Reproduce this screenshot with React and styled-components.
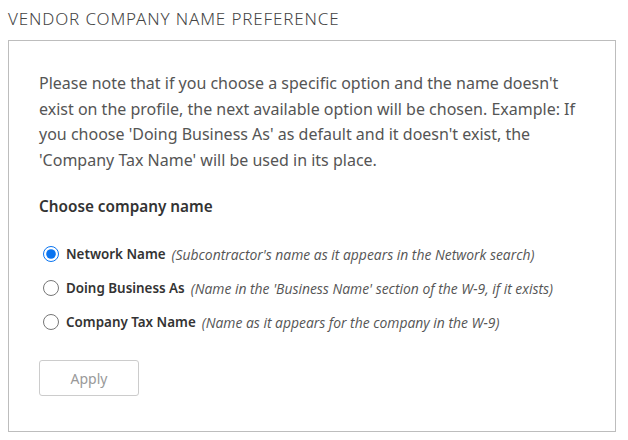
import React, { useState } from 'react';
import styled, { createGlobalStyle } from 'styled-components';

const GlobalStyle = createGlobalStyle`
  body {
    margin: 0;
    background: #fff;
    font-family: "Noto Sans", "Open Sans", sans-serif;
  }
`;

const options = [
  { id: 'network', name: 'Network Name', note: "(Subcontractor's name as it appears in the Network search)" },
  { id: 'dba', name: 'Doing Business As', note: "(Name in the 'Business Name' section of the W-9, if it exists)" },
  { id: 'tax', name: 'Company Tax Name', note: '(Name as it appears for the company in the W-9)' },
];

const App = () => {
  const [selected, setSelected] = useState('network');

  return (
    <Page>
      <GlobalStyle />
      <Heading>VENDOR COMPANY NAME PREFERENCE</Heading>
      <Panel>
        <Note>
          Please note that if you choose a specific option and the name doesn't exist on the profile, the next available option will be chosen. Example: If you choose 'Doing Business As' as default and it doesn't exist, the 'Company Tax Name' will be used in its place.
        </Note>
        <SubTitle>Choose company name</SubTitle>
        <Options>
          { options.map( opt => {
            return (
              <Option key={ opt.id }>
                <Radio
                  type="radio"
                  name="company-name"
                  checked={ selected === opt.id }
                  onChange={ () => setSelected(opt.id) }
                />
                <OptionName>{ opt.name }</OptionName>
                <OptionNote>{ opt.note }</OptionNote>
              </Option>
            )
          }) }
        </Options>
        <ApplyButton disabled>Apply</ApplyButton>
      </Panel>
    </Page>
  )
}

export default App;


const Page = styled.div`
  padding: 8px 12px 8px 8px;
  width: 628px;
  box-sizing: border-box;
`;

const Heading = styled.h2`
  margin: 0 0 10px;
  font-size: 17px;
  font-weight: 300;
  letter-spacing: 0.85px;
  line-height: 22px;
  color: #444;
`;

const Panel = styled.div`
  border: 1px solid #bdbdbd;
  padding: 30px 30px 35px 30px;
  display: flex;
  flex-direction: column;
  align-items: flex-start;
`;

const Note = styled.p`
  margin: 0;
  font-size: 16px;
  line-height: 25.6px;
  color: #555;
`;

const SubTitle = styled.h3`
  margin: 21px 0 0;
  font-size: 15.3px;
  font-weight: 600;
  color: #333;
  line-height: 24px;
`;

const Options = styled.div`
  display: flex;
  flex-direction: column;
  gap: 10px;
  margin-top: 24px;
`;

const Option = styled.label`
  display: flex;
  align-items: center;
  gap: 6px;
  height: 24px;
  cursor: pointer;
  font-size: 13.4px;
`;

const Radio = styled.input`
  margin: 0 1px 0 4px;
  width: 16px;
  height: 16px;
  accent-color: #0a74f0;
`;

const OptionName = styled.span`
  font-weight: 600;
  color: #333;
`;

const OptionNote = styled.span`
  font-family: "Open Sans", sans-serif;
  font-style: italic;
  font-size: 13.9px;
  color: #555;
`;

const ApplyButton = styled.button`
  margin-top: 26px;
  width: 100px;
  height: 36px;
  background: #fff;
  border: 1px solid #ccc;
  border-radius: 3px;
  font-family: "Noto Sans", sans-serif;
  font-size: 14px;
  color: #999;
`;
